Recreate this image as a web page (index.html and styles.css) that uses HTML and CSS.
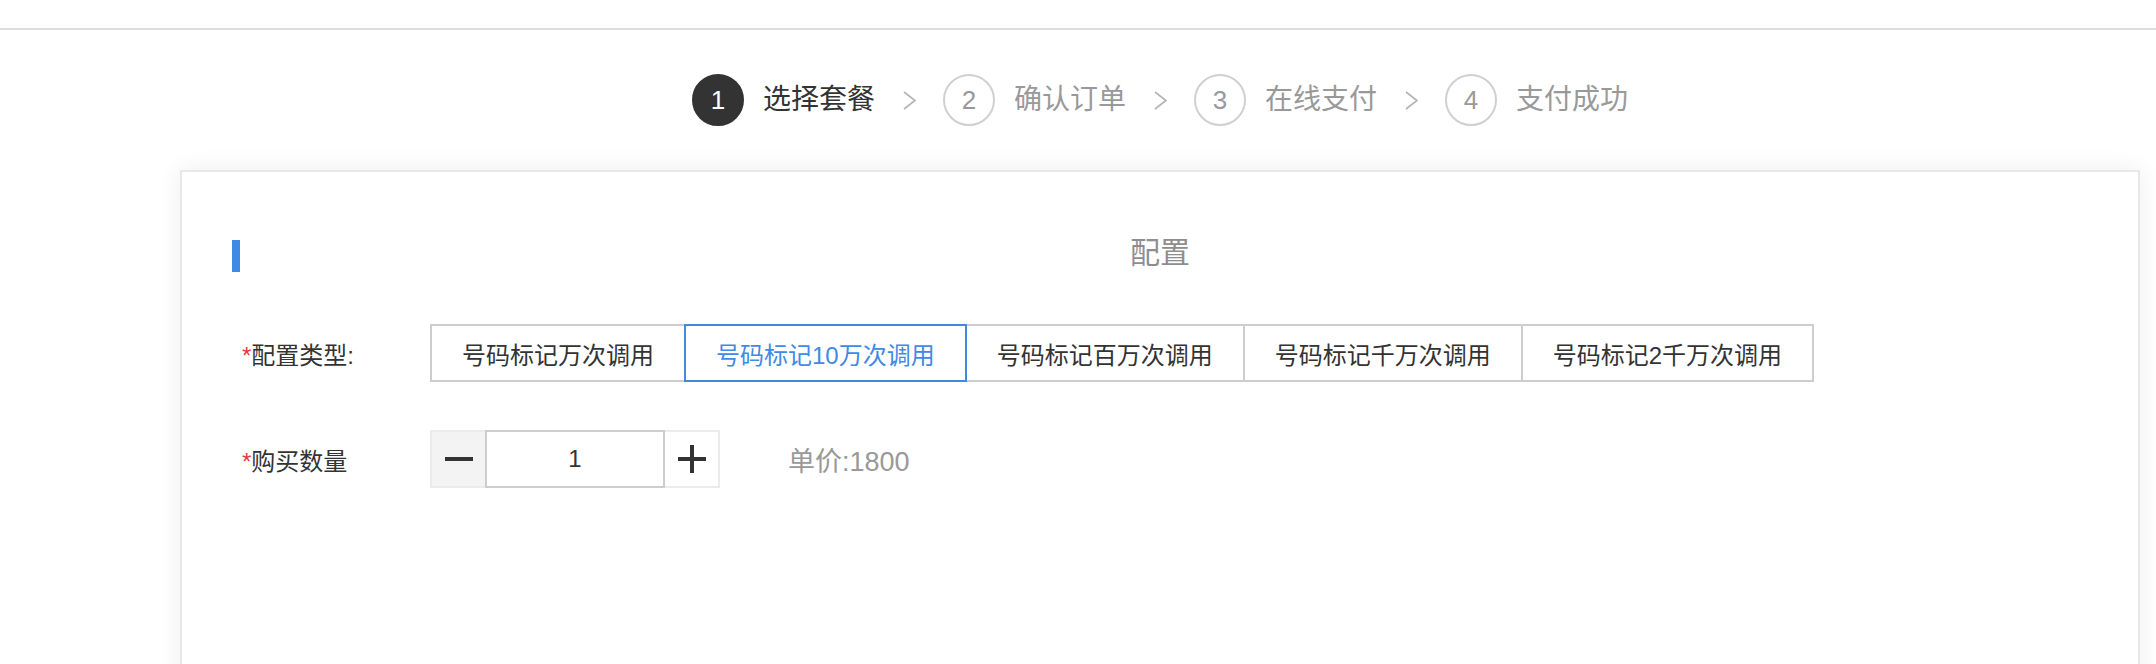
FILE: index.html
```html
<!DOCTYPE html>
<html lang="zh-CN">
<head>
<meta charset="utf-8">
<title>选择套餐</title>
<link rel="stylesheet" href="styles.css">
</head>
<body>
<div class="topbar"></div>
<div class="steps">
  <div class="step active"><span class="num">1</span><span class="label">选择套餐</span></div>
  <svg class="chev" viewBox="0 0 13 19" width="13" height="19"><polyline points="1,1 12,9.5 1,18" fill="none" stroke="#b3b3b3" stroke-width="1.6"/></svg>
  <div class="step"><span class="num">2</span><span class="label">确认订单</span></div>
  <svg class="chev" viewBox="0 0 13 19" width="13" height="19"><polyline points="1,1 12,9.5 1,18" fill="none" stroke="#b3b3b3" stroke-width="1.6"/></svg>
  <div class="step"><span class="num">3</span><span class="label">在线支付</span></div>
  <svg class="chev" viewBox="0 0 13 19" width="13" height="19"><polyline points="1,1 12,9.5 1,18" fill="none" stroke="#b3b3b3" stroke-width="1.6"/></svg>
  <div class="step"><span class="num">4</span><span class="label">支付成功</span></div>
</div>
<div class="card">
  <div class="card-head">
    <span class="bar"></span>
    <span class="title">配置</span>
    <span></span>
  </div>
  <div class="form-row row-type">
    <div class="form-label"><span class="req">*</span>配置类型:</div>
    <div class="options">
      <div class="opt">号码标记万次调用</div>
      <div class="opt selected">号码标记10万次调用</div>
      <div class="opt">号码标记百万次调用</div>
      <div class="opt">号码标记千万次调用</div>
      <div class="opt">号码标记2千万次调用</div>
    </div>
  </div>
  <div class="form-row row-qty">
    <div class="form-label"><span class="req">*</span>购买数量</div>
    <div class="stepper">
      <div class="btn minus"><span class="h"></span></div>
      <div class="qty">1</div>
      <div class="btn plus"><span class="h"></span><span class="v"></span></div>
    </div>
    <div class="price">单价:1800</div>
  </div>
</div>
</body>
</html>
```
FILE: styles.css
```css
html, body {
  margin: 0;
  padding: 0;
  background: #fff;
  font-family: "Liberation Sans", "Noto Sans CJK SC", sans-serif;
  color: #333;
}

.topbar {
  height: 28px;
  border-bottom: 2px solid #dcdcdc;
}

.steps {
  display: flex;
  align-items: center;
  justify-content: center;
  width: 1960px;
  height: 52px;
  margin: 44px 0 44px 180px;
}

.step {
  display: flex;
  align-items: center;
  gap: 19px;
}

.step .num {
  width: 52px;
  height: 52px;
  box-sizing: border-box;
  border: 2px solid #d0d0d0;
  border-radius: 50%;
  display: flex;
  align-items: center;
  justify-content: center;
  font-size: 26px;
  color: #999;
}

.step .label {
  font-size: 28px;
  color: #999;
  line-height: 1;
}

.step.active .num {
  background: #333;
  border-color: #333;
  color: #fff;
}

.step.active .label {
  color: #333;
}

.chev {
  margin: 0 27px 0 28px;
  display: block;
}

.card {
  margin-left: 180px;
  width: 1960px;
  min-height: 620px;
  box-sizing: border-box;
  border: 2px solid #e8e8e8;
  box-shadow: 0 0 24px rgba(0, 0, 0, 0.07);
  padding: 68px 50px 0;
  background: #fff;
}

.card-head {
  display: grid;
  grid-template-columns: 1fr auto 1fr;
  align-items: center;
  height: 32px;
}

.bar {
  width: 8px;
  height: 32px;
  background: #3f8ae4;
}

.title {
  font-size: 30px;
  color: #8e8e8e;
  line-height: 32px;
  margin-top: -6px;
}

.form-row {
  display: flex;
  align-items: center;
  padding-left: 10px;
}

.row-type {
  margin-top: 52px;
}

.row-qty {
  margin-top: 48px;
}

.form-label {
  width: 188px;
  font-size: 24px;
  color: #333;
}

.req {
  color: #e4393c;
}

.options {
  display: flex;
}

.opt {
  height: 58px;
  box-sizing: border-box;
  border: 2px solid #cdcdcd;
  padding: 0 30px;
  margin-left: -2px;
  display: flex;
  align-items: center;
  font-size: 24px;
  color: #333;
  background: #fff;
}

.opt:first-child {
  margin-left: 0;
}

.opt.selected {
  border-color: #3f8ae4;
  color: #3f8ae4;
  position: relative;
  z-index: 1;
}

.stepper {
  display: flex;
}

.stepper .btn {
  width: 57px;
  height: 58px;
  box-sizing: border-box;
  border: 2px solid #ebebeb;
  display: flex;
  align-items: center;
  justify-content: center;
  position: relative;
}

.stepper .minus {
  background: #f3f3f3;
}

.stepper .plus {
  background: #fff;
  margin-left: -2px;
}

.stepper .h {
  width: 28px;
  height: 4px;
  background: #333;
}

.stepper .v {
  position: absolute;
  width: 4px;
  height: 28px;
  background: #333;
}

.qty {
  width: 180px;
  height: 58px;
  box-sizing: border-box;
  border: 2px solid #cdcdcd;
  margin-left: -2px;
  display: flex;
  align-items: center;
  justify-content: center;
  font-size: 24px;
  color: #333;
  position: relative;
  z-index: 1;
}

.price {
  margin-left: 68px;
  font-size: 27px;
  color: #999;
}
```
